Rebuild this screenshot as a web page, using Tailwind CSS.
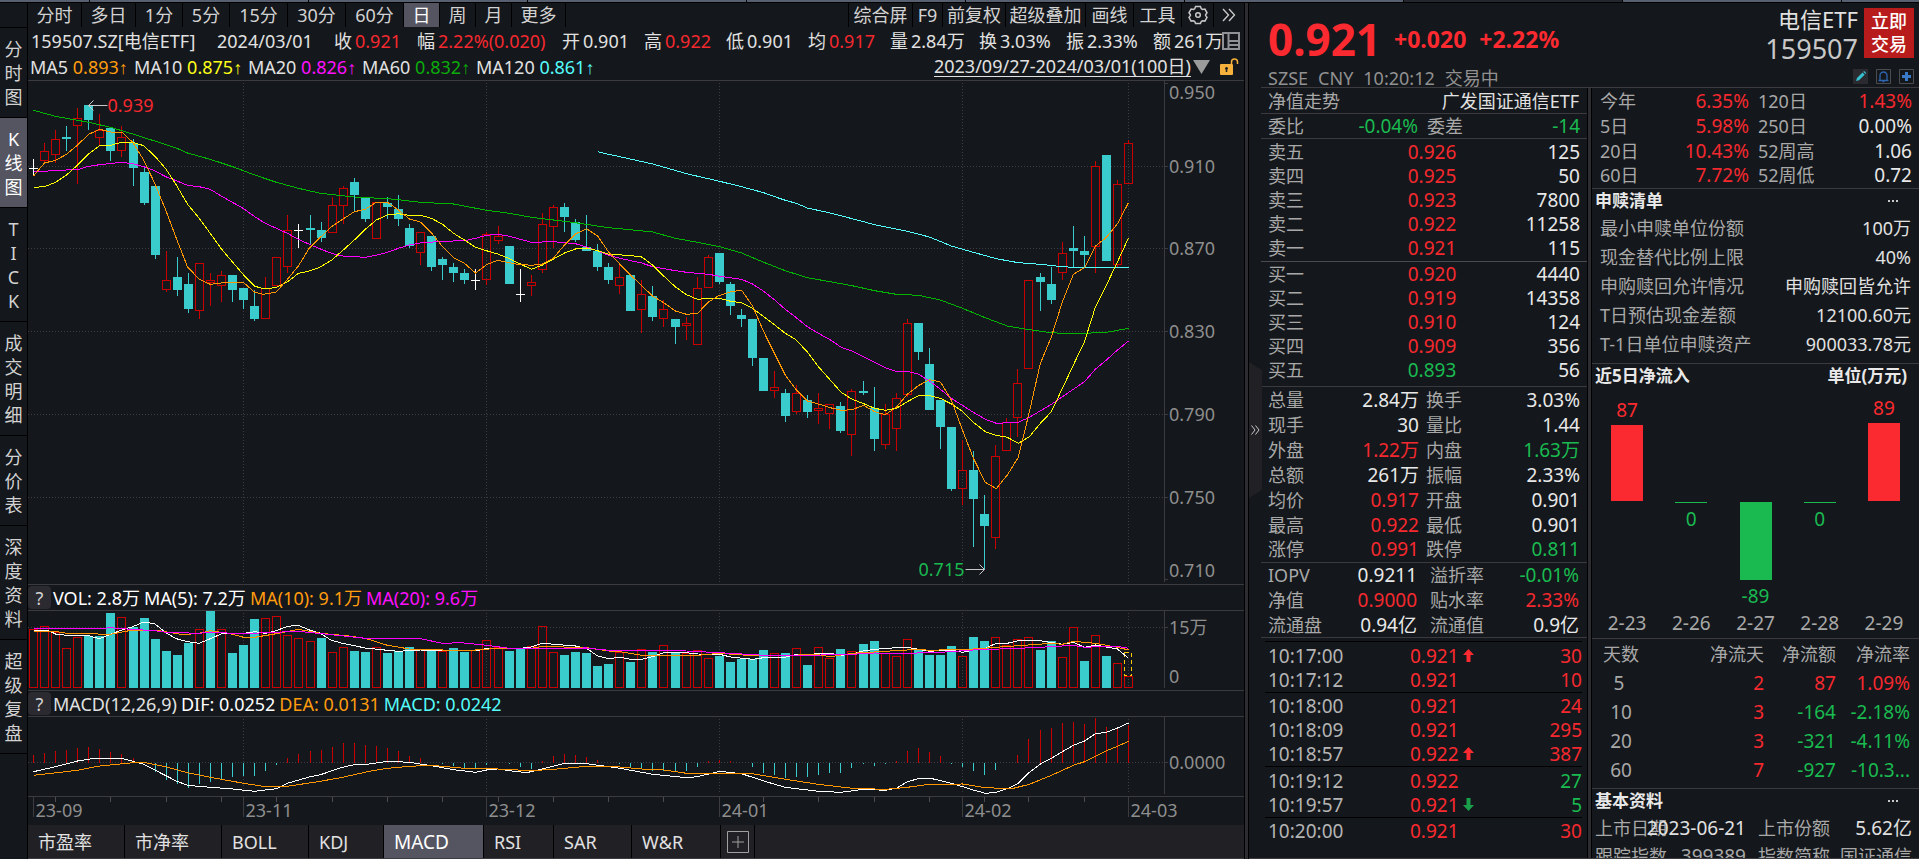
<!DOCTYPE html>
<html lang="zh-CN">
<head>
<meta charset="utf-8">
<title>159507.SZ 电信ETF</title>
<script src="https://cdn.jsdelivr.net/npm/@tailwindcss/browser@4"></script>
</head>
<body class="bg-[#14171b] text-[#e1e1e1] text-[18px] leading-6 font-['Noto_Sans','Noto_Sans_CJK_SC',sans-serif]">
<div class="h-screen overflow-hidden flex flex-col">
  <div class="h-[3px] shrink-0 flex bg-[#566070] border-b border-black">
    <div class="w-[90px] border-r border-black"></div><div class="w-[219px] border-r border-black"></div><div class="w-[219px] border-r border-black"></div><div class="w-[219px] border-r border-black"></div><div class="w-[219px] border-r border-black"></div><div class="w-[219px] border-r border-black"></div><div class="w-[219px] border-r border-black"></div><div class="w-[219px] border-r border-black bg-[#24272e]"></div><div class="w-[219px] border-r border-black"></div>
  </div>
  <div class="flex flex-1 min-h-0 whitespace-nowrap">

    <!-- view switcher -->
    <nav class="w-[28px] shrink-0 border-r border-black pt-6 flex flex-col text-[#d2d2d2]">
      <button class="border-t border-black h-[90px] flex flex-col items-center justify-center"><span>分</span><span>时</span><span>图</span></button>
      <button class="border-t border-black h-[90px] flex flex-col items-center justify-center bg-[#555561] text-white"><span>K</span><span>线</span><span>图</span></button>
      <button class="border-t border-black h-[114px] flex flex-col items-center justify-center"><span>T</span><span>I</span><span>C</span><span>K</span></button>
      <button class="border-t border-black h-[114px] flex flex-col items-center justify-center"><span>成</span><span>交</span><span>明</span><span>细</span></button>
      <button class="border-t border-black h-[90px] flex flex-col items-center justify-center"><span>分</span><span>价</span><span>表</span></button>
      <button class="border-t border-black h-[114px] flex flex-col items-center justify-center"><span>深</span><span>度</span><span>资</span><span>料</span></button>
      <button class="border-y border-black h-[115px] flex flex-col items-center justify-center"><span>超</span><span>级</span><span>复</span><span>盘</span></button>
    </nav>

    <!-- chart column -->
    <main class="flex-1 min-w-0 flex flex-col">
      <div class="h-6 shrink-0 flex justify-between text-[#d2d2d2]">
        <div class="flex">
          <button class="w-[54px] border-r border-black">分时</button><button class="w-[54px] border-r border-black">多日</button><button class="w-[47px] border-r border-black">1分</button><button class="w-[47px] border-r border-black">5分</button><button class="w-[58px] border-r border-black">15分</button><button class="w-[58px] border-r border-black">30分</button><button class="w-[58px] border-r border-black">60分</button><button class="w-[36px] border-r border-black bg-[#555561] text-white">日</button><button class="w-[36px] border-r border-black">周</button><button class="w-[36px] border-r border-black">月</button><button class="w-[54px] border-r border-black">更多</button>
        </div>
        <div class="flex">
          <button class="w-[64px] border-l border-black">综合屏</button><button class="w-[30px] border-l border-black">F9</button><button class="w-[63px] border-l border-black">前复权</button><button class="w-[80px] border-l border-black">超级叠加</button><button class="w-[48px] border-l border-black">画线</button><button class="w-[48px] border-l border-black">工具</button>
          <button class="w-[32px] border-l border-black flex items-center justify-center" aria-label="设置"><svg width="20" height="20" viewBox="0 0 20 20" fill="none" stroke="#c8c8c8" stroke-width="1.5"><path d="M7.6 1.5h4.8l.9 2.2 1.2.7 2.4-.3 2.1 3.7-1.4 1.9v.9l1.4 1.8-2.1 3.7-2.4-.3-1.2.7-.9 2.1H7.6l-.9-2.1-1.2-.7-2.4.3L1 12.400l1.400-1.800v-.9L1 7.800l2.100-3.700 2.400.3 1.200-.7z"/><circle cx="10" cy="10" r="2.300"/></svg></button>
          <button class="w-[31px] border-l border-black flex items-center justify-center" aria-label="展开"><svg width="14" height="14" viewBox="0 0 14 14" fill="none" stroke="#c8c8c8" stroke-width="1.400"><path d="M1 1l5.500 6L1 13M7 1l5.500 6L7 13"/></svg></button>
        </div>
      </div>
      <div class="h-[27px] shrink-0 flex items-center pl-[3px] relative">
        <span class="w-[186px]">159507.SZ[电信ETF]</span>
        <span class="w-[117px]">2024/03/01</span>
        <span class="w-[83px]">收<span class="text-[#f4292f] ml-[3px]">0.921</span></span>
        <span class="w-[145px]">幅<span class="text-[#f4292f] ml-[3px]">2.22%(0.020)</span></span>
        <span class="w-[82px]">开<span class="ml-[3px]">0.901</span></span>
        <span class="w-[82px]">高<span class="text-[#f4292f] ml-[3px]">0.922</span></span>
        <span class="w-[82px]">低<span class="ml-[3px]">0.901</span></span>
        <span class="w-[82px]">均<span class="text-[#f4292f] ml-[3px]">0.917</span></span>
        <span class="w-[89px]">量<span class="ml-[3px]">2.84万</span></span>
        <span class="w-[87px]">换<span class="ml-[3px]">3.03%</span></span>
        <span class="w-[87px]">振<span class="ml-[3px]">2.33%</span></span>
        <span>额<span class="ml-[3px]">261万</span></span>
        <svg class="absolute right-1 top-[5px]" width="18" height="18" viewBox="0 0 18 18" fill="none" stroke="#8f9196" stroke-width="2"><path d="M1 1h16v16H1zM6.500 1v16M6.500 9H17M6.500 13H17"/></svg>
      </div>
      <div class="h-[27px] shrink-0 flex items-center pl-[2px] border-b border-[#3a3a3f]">
        <span class="w-[104px]">MA5 <span class="text-[#ff9c0f]">0.893<span class="font-['Liberation_Sans']">↑</span></span></span>
        <span class="w-[114px]">MA10 <span class="text-[#ffff19]">0.875<span class="font-['Liberation_Sans']">↑</span></span></span>
        <span class="w-[114px]">MA20 <span class="text-[#ff10ff]">0.826<span class="font-['Liberation_Sans']">↑</span></span></span>
        <span class="w-[114px]">MA60 <span class="text-[#0cab0c]">0.832<span class="font-['Liberation_Sans']">↑</span></span></span>
        <span>MA120 <span class="text-[#54fcfc]">0.861<span class="font-['Liberation_Sans']">↑</span></span></span>
        <a href="#" class="ml-auto border-b border-[#e1e1e1] leading-[19px]">2023/09/27-2024/03/01(100日)</a>
        <svg class="ml-px mr-2" width="19" height="16" viewBox="0 0 19 16"><path d="M1 1h17L9.500 15z" fill="#9b9b9b"/></svg>
        <svg class="mr-[5px]" width="20" height="18" viewBox="0 0 20 18"><rect x="1" y="6" width="13" height="11" rx="1" fill="#f5b13c"/><path d="M12.500 6V4a3 3 0 0 1 6 0v2" fill="none" stroke="#f5b13c" stroke-width="1.500"/><path d="M7.500 9v5M6 10.500h3" stroke="#222" stroke-width="1.500"/></svg>
      </div>

      <div class="h-[504px] shrink-0 flex border-b border-[#3a3a3f]">
        <svg id="price" class="flex-1 min-w-0 h-full"></svg>
        <svg class="w-20 h-full shrink-0" fill="#8e8e8e" stroke="none"><path d="M.5 0V501M0 2.500H4M0 85.500H4M0 167.500H4M0 250.500H4M0 333.500H4M0 416.500H4M0 498.500H4" stroke="#3a3a3f"/><text x="5" y="18">0.950</text><text x="5" y="92">0.910</text><text x="5" y="174">0.870</text><text x="5" y="257">0.830</text><text x="5" y="340">0.790</text><text x="5" y="423">0.750</text><text x="5" y="496">0.710</text></svg>
      </div>
      <div class="h-[26px] shrink-0 flex items-center gap-1 border-b border-[#3a3a3f] text-white">
        <button class="w-[23px] h-[23px] leading-[22px] rounded bg-[#2a2a30] text-[#d2d2d2] -mr-[2px]">?</button>
        <span>VOL: 2.8万</span><span>MA(5): 7.2万</span><span class="text-[#ff9c0f]">MA(10): 9.1万</span><span class="text-[#ff10ff]">MA(20): 9.6万</span>
      </div>
      <div class="h-[80px] shrink-0 flex border-b border-[#3a3a3f]">
        <svg id="volume" class="flex-1 min-w-0 h-full"></svg>
        <svg class="w-20 h-full shrink-0" fill="#8e8e8e"><path d="M.5 0V77M0 16.500H4" stroke="#3a3a3f"/><text x="5" y="23">15万</text><text x="5" y="72">0</text></svg>
      </div>
      <div class="h-[26px] shrink-0 flex items-center gap-1 border-b border-[#3a3a3f]">
        <button class="w-[23px] h-[23px] leading-[22px] rounded bg-[#2a2a30] text-[#d2d2d2] -mr-[2px]">?</button>
        <span>MACD(12,26,9)</span><span class="text-white">DIF: 0.0252</span><span class="text-[#ff9c0f]">DEA: 0.0131</span><span class="text-[#54fcfc]">MACD: 0.0242</span>
      </div>
      <div class="h-[80px] shrink-0 flex border-b border-[#3a3a3f]">
        <svg id="macd" class="flex-1 min-w-0 h-full"></svg>
        <svg class="w-20 h-full shrink-0" fill="#8e8e8e"><path d="M.5 0V77M0 45.500H4" stroke="#3a3a3f"/><text x="5" y="52">0.0000</text></svg>
      </div>
      <svg id="dates" class="w-full h-7 shrink-0 overflow-visible"></svg>
      <div class="h-[34px] shrink-0 flex bg-[#212025] border-b border-[#3a3a3f] text-left">
        <button class="w-[97px] pl-[10px] text-left border-r border-black">市盈率</button><button class="w-[97px] pl-[10px] text-left border-r border-black">市净率</button><button class="w-[87px] pl-[10px] text-left border-r border-black">BOLL</button><button class="w-[75px] pl-[10px] text-left border-r border-black">KDJ</button><button class="w-[100px] pl-[10px] text-left border-r border-black bg-[#555561] text-white text-[19px]">MACD</button><button class="w-[70px] pl-[10px] text-left border-r border-black">RSI</button><button class="w-[78px] pl-[10px] text-left border-r border-black">SAR</button><button class="w-[89px] pl-[10px] text-left border-r border-black">W&amp;R</button>
        <button class="w-[34px] border-r border-black flex items-center justify-center" aria-label="添加指标"><svg width="22" height="22" viewBox="0 0 22 22" fill="none" stroke="#a0a0a0"><path d="M.5.5h21v21H.5zM11 5v12M5 11h12"/></svg></button>
      </div>
    </main>

    <div class="w-1 shrink-0 border-l border-black bg-[#2d2c31]"></div>

    <!-- quote panel -->
    <aside class="w-[671px] shrink-0 border-l border-black relative flex flex-col pl-[12px]">
      <button class="absolute left-0 top-[359px] w-[13px] h-[136px] flex items-center justify-center bg-[#212025] [clip-path:polygon(0_0,100%_6%,100%_94%,0_100%)]" aria-label="收起"><svg width="9" height="10" viewBox="0 0 9 10" fill="none" stroke="#c8c8c8"><path d="M.5.5L4 5 .5 9.500M4.500.5L8 5 4.500 9.500"/></svg></button>
      <header class="h-[85px] shrink-0 border-b border-[#3a3a3f] pl-[7px] pr-[5px] flex justify-between">
        <div class="flex flex-col justify-between">
          <div class="flex items-center gap-[13px] font-bold text-[#fb2a30] pt-2">
            <span class="text-[44px] leading-[56px]">0.921</span><span class="text-[23px]">+0.020</span><span class="text-[23px]">+2.22%</span>
          </div>
          <div class="flex gap-[10px] text-[#919191] leading-[17px]"><span>SZSE</span><span>CNY</span><span>10:20:12</span><span>交易中</span></div>
        </div>
        <div class="flex flex-col">
          <div class="flex gap-[6px]">
            <div class="text-right pt-[2px]"><div class="text-[22px] leading-[28px]">电信ETF</div><div class="text-[27px] leading-[32px] text-[#c8c8c8]">159507</div></div>
            <button class="mt-[5px] w-[50px] h-[50px] bg-[#b81b1b] text-white font-medium leading-[23px] whitespace-normal px-1">立即交易</button>
          </div>
          <div class="flex justify-end gap-2 mt-auto">
            <button class="mb-[3px]" aria-label="编辑"><svg width="15" height="15" viewBox="0 0 15 15"><rect width="15" height="15" fill="#2a2a30"/><path d="M3 12l1-3 5.500-5.500 2.200 2.200L6 11.200z" fill="#35c0d0"/><path d="M10.200 2.800l1-.8 2 2-.8 1z" fill="#35c0d0"/></svg></button>
            <button class="mb-[3px]" aria-label="提醒"><svg width="15" height="15" viewBox="0 0 15 15" fill="none"><path d="M.5.5h14v14H.5z" stroke="#4a4c50"/><path d="M2.500 11.500h10M4 11V6.500a3.500 3.500 0 0 1 7 0V11M6.500 12.500h2" stroke="#2f65b0" stroke-width="1.300"/></svg></button>
            <button class="mb-[3px]" aria-label="加自选"><svg width="15" height="15" viewBox="0 0 15 15" fill="none"><path d="M.5.5h14v14H.5z" stroke="#4a4c50"/><path d="M7.500 3v9M3 7.500h9" stroke="#3a78c8" stroke-width="3"/></svg></button>
          </div>
        </div>
      </header>

      <div class="flex flex-1 min-h-0 overflow-hidden text-[#a8a8a8]">
        <div class="flex-1 min-w-0 flex flex-col border-r border-black">
          <div class="h-[26px] shrink-0 pl-[7px] pr-2 flex justify-between items-center border-b border-[#3a3a3f]"><span>净值走势</span><span class="text-[#e1e1e1]">广发国证通信ETF</span></div>
          <div class="h-[25px] shrink-0 pl-[7px] pr-[7px] flex items-center border-b border-[#3a3a3f]"><span>委比</span><span class="ml-auto text-[19px] text-[#1aba51]">-0.04%</span><span class="w-[162px] pl-[9px] flex justify-between"><span>委差</span><span class="text-[19px] text-[#1aba51]">-14</span></span></div>
          <table id="book" class="w-full table-fixed shrink-0 border-collapse"></table>
          <table id="stats" class="w-full table-fixed shrink-0 border-collapse"></table>
          <table id="fund" class="w-full table-fixed shrink-0 border-collapse"></table>
          <table id="ticks" class="mt-[3px] ml-1 mr-[5px] table-fixed shrink-0 border-collapse text-[19px] text-[#b4b4b4]"></table>
        </div>
        <div class="w-[4px] shrink-0 bg-[#2d2c31] border-r border-black"></div>
        <div class="w-[327px] shrink-0 flex flex-col">
          <table id="returns" class="w-full table-fixed shrink-0 border-b border-[#3a3a3f]"></table>
          <div class="h-[25px] shrink-0 pl-[3px] pr-[21px] flex justify-between items-center text-[#e8e8e8] text-[17px]"><b>申赎清单</b><button aria-label="更多" class="flex gap-[2px]"><i class="size-[2px] bg-[#c8c8c8]"></i><i class="size-[2px] bg-[#c8c8c8]"></i><i class="size-[2px] bg-[#c8c8c8]"></i></button></div>
          <table id="list" class="w-full shrink-0"></table>
          <div class="h-[30px] mt-1 shrink-0 pr-3 pl-[3px] flex justify-between border-t border-[#3a3a3f] text-[#e8e8e8] text-[17px]"><b>近5日净流入</b><b>单位(万元)</b></div>
          <div id="flow" class="h-[219px] shrink-0 flex px-[3px]"></div>
          <div class="h-[27px] shrink-0 flex px-[3px] text-center text-[19px] leading-[22px] border-b border-[#3a3a3f]"><span class="flex-1">2-23</span><span class="flex-1">2-26</span><span class="flex-1">2-27</span><span class="flex-1">2-28</span><span class="flex-1">2-29</span></div>
          <table class="w-full table-fixed shrink-0 text-right text-[19px]">
            <thead><tr class="h-[30px] text-[18px]"><th class="font-normal text-left pl-[11px] w-[90px]">天数</th><th class="font-normal">净流天</th><th class="font-normal w-[72px]">净流额</th><th class="font-normal w-[83px] pr-[9px]">净流率</th></tr></thead>
            <tbody>
              <tr class="h-[29px]"><td class="text-center pr-9">5</td><td class="text-[#f4292f]">2</td><td class="text-[#f4292f]">87</td><td class="text-[#f4292f] pr-[9px]">1.09%</td></tr>
              <tr class="h-[29px]"><td class="text-center pr-[32px]">10</td><td class="text-[#f4292f]">3</td><td class="text-[#1aba51]">-164</td><td class="text-[#1aba51] pr-[9px]">-2.18%</td></tr>
              <tr class="h-[29px]"><td class="text-center pr-[32px]">20</td><td class="text-[#f4292f]">3</td><td class="text-[#1aba51]">-321</td><td class="text-[#1aba51] pr-[9px]">-4.11%</td></tr>
              <tr class="h-[29px]"><td class="text-center pr-[32px]">60</td><td class="text-[#f4292f]">7</td><td class="text-[#1aba51]">-927</td><td class="text-[#1aba51] pr-[9px]">-10.3...</td></tr>
            </tbody>
          </table>
          <div class="h-[26px] mt-[3px] shrink-0 pl-[3px] pr-[21px] flex justify-between items-center border-t border-[#3a3a3f] text-[#e8e8e8] text-[17px]"><b>基本资料</b><button aria-label="更多" class="flex gap-[2px]"><i class="size-[2px] bg-[#c8c8c8]"></i><i class="size-[2px] bg-[#c8c8c8]"></i><i class="size-[2px] bg-[#c8c8c8]"></i></button></div>
          <div class="h-7 shrink-0 flex items-center pl-[3px] pr-[7px]"><span class="w-[50px]">上市日期</span><span class="w-[101px] flex justify-end text-[19px] text-[#e1e1e1]">2023-06-21</span><span class="ml-3">上市份额</span><span class="ml-auto text-[19px] text-[#e1e1e1]">5.62亿</span></div>
          <div class="h-7 shrink-0 flex items-center pl-[3px] pr-[7px]"><span class="w-[50px]">跟踪指数</span><span class="w-[101px] flex justify-end text-[19px]">399389</span><span class="ml-3">指数简称</span><span class="ml-auto">国证通信</span></div>
        </div>
      </div>
      <div class="-ml-3 h-px shrink-0 bg-[#3a3a3f]"></div>
    </aside>
  </div>
</div>

<script>
const RED = '#c80000', CYAN = '#3acccc', GRID = '#3c3c42';
const tone = { r: 'text-[#f4292f]', g: 'text-[#1aba51]', w: 'text-[#e8e8e8]' };

/* ---------- data tables ---------- */
const book = [['卖五','0.926','r','125'],['卖四','0.925','r','50'],['卖三','0.923','r','7800'],['卖二','0.922','r','11258'],['卖一','0.921','r','115'],['买一','0.920','r','4440'],['买二','0.919','r','14358'],['买三','0.910','r','124'],['买四','0.909','r','356'],['买五','0.893','g','56']];
const bookRow = ([l, p, c, v]) => `<tr class="h-6"><td class="pl-[7px]">${l}</td><td class="text-[19px] text-right pr-[22px] ${tone[c]}">${p}</td><td class="text-[19px] text-right pr-[7px] text-[#e8e8e8]">${v}</td></tr>`;
document.getElementById('book').innerHTML =
  `<tbody class="border-b border-[#4a4a50]"><tr class="h-px"></tr>${book.slice(0, 5).map(bookRow).join('')}<tr class="h-px"></tr></tbody>` +
  `<tbody class="border-b border-[#3a3a3f]">${book.slice(5).map(bookRow).join('')}<tr class="h-[5px]"></tr></tbody>`;

const pairRow = (label, value) => ([a, b, c, d, e, f]) => `<tr class="h-[25px]"><td class="w-[68px] pl-[7px]">${a}</td><td class="text-[19px] text-right ${tone[c]}">${b}</td><td class="${label}">${d}</td><td class="w-[82px] text-[19px] text-right ${value} ${tone[f]}">${e}</td></tr>`;
document.getElementById('stats').innerHTML = '<tbody class="border-b border-[#3a3a3f]">' + [
  ['总量','2.84万','w','换手','3.03%','w'],['现手','30','w','量比','1.44','w'],['外盘','1.22万','r','内盘','1.63万','g'],['总额','261万','w','振幅','2.33%','w'],['均价','0.917','r','开盘','0.901','w'],['最高','0.922','r','最低','0.901','w'],['涨停','0.991','r','跌停','0.811','g']
].map(pairRow('w-[86px] pl-[7px]', 'pr-[7px]')).join('') + '</tbody>';
document.getElementById('fund').innerHTML = '<tbody class="border-b border-[#3a3a3f]">' + [
  ['IOPV','0.9211','w','溢折率','-0.01%','g'],['净值','0.9000','r','贴水率','2.33%','r'],['流通盘','0.94亿','w','流通值','0.9亿','w']
].map(pairRow('w-[88px] pl-[13px]', 'pr-[8px]')).join('') + '</tbody>';

const arrow = { u: '<svg class="inline ml-1 -mt-1" width="11" height="13" viewBox="0 0 11 13"><path d="M5.500 0L11 6H7.500v7h-4V6H0z" fill="#fb2a30"/></svg>', d: '<svg class="inline ml-1 -mt-1" width="11" height="13" viewBox="0 0 11 13"><path d="M5.500 13L11 7H7.500V0h-4v7H0z" fill="#1aa04a"/></svg>', '': '' };
document.getElementById('ticks').innerHTML = [
  [['10:17:00','0.921','u','30','r'],['10:17:12','0.921','','10','r']],
  [['10:18:00','0.921','','24','r'],['10:18:09','0.921','','295','r'],['10:18:57','0.922','u','387','r']],
  [['10:19:12','0.922','','27','g'],['10:19:57','0.921','d','5','g']],
  [['10:20:00','0.921','','30','r']]
].map(g => `<tbody class="border-t border-black"><tr class="h-[2px]"></tr>${g.map(([t, p, a, v, c]) => `<tr class="h-6"><td class="pl-[3px] w-[145px]">${t}</td><td class="text-[#fb2a30]">${p}${arrow[a]}</td><td class="text-right ${tone[c]}">${v}</td></tr>`).join('')}</tbody>`).join('');

document.getElementById('returns').innerHTML = '<tbody>' + [
  ['今年','6.35%','120日','1.43%','r'],['5日','5.98%','250日','0.00%','w'],['20日','10.43%','52周高','1.06','w'],['60日','7.72%','52周低','0.72','w']
].map(([a, b, c, d, e]) => `<tr class="h-[25px]"><td class="pl-2 w-[60px]">${a}</td><td class="w-[97px] text-right text-[19px] text-[#f4292f]">${b}</td><td class="pl-[9px]">${c}</td><td class="w-[90px] text-right text-[19px] pr-[7px] ${tone[e]}">${d}</td></tr>`).join('') + '</tbody>';
document.getElementById('list').innerHTML = '<tbody>' + [
  ['最小申赎单位份额','100万'],['现金替代比例上限','40%'],['申购赎回允许情况','申购赎回皆允许'],['T日预估现金差额','12100.60元'],['T-1日单位申赎资产','900033.78元']
].map(([a, b]) => `<tr class="h-[29px]"><td class="pl-2">${a}</td><td class="text-right pr-2 text-[#e1e1e1]">${b}</td></tr>`).join('') + '</tbody>';

document.getElementById('flow').innerHTML = [87, 0, -89, 0, 89].map(v => {
  const bar = h => `<div class="w-8 ${v > 0 ? 'bg-[#fb2a30]' : 'bg-[#1aba51]'}" style="height:${h}px"></div>`;
  return `<div class="flex-1 flex flex-col items-center text-[19px]"><div class="h-[108px] flex flex-col items-center justify-end gap-[3px] text-[#fb2a30]">${v > 0 ? `<span>${v}</span>${bar(Math.round(v * .875))}` : ''}</div>` +
    (v > 0 ? '' : `<div class="mt-px flex flex-col items-center gap-1 text-[#1aba51]">${bar(Math.max(1, Math.round(-v * .875)))}<span>${v}</span></div>`) + '</div>';
}).join('');

/* ---------- candle data: type, body top, body bottom, high, low (third-pixels) ---------- */
const candles = `x505,505,477,528 r453,482,430,485 r418,464,390,490 c411,416,378,453 r355,377,323,552 c316,360,316,390 r391,415,342,436 c383,453,383,483 r412,452,378,471 c430,503,418,558 c516,609,505,614 c558,765,558,777 r841,869,753,876 c831,869,771,888 c852,927,819,939 r790,932,790,957 r841,850,819,918 r826,857,813,906 c825,870,825,906 c864,900,864,927 c918,957,870,963 r864,956,831,956 r772,857,772,857 r691,800,645,819 x690,690,672,744 c684,690,645,735 c690,714,666,726 r616,700,591,700 r565,619,558,671 c546,585,534,634 c594,657,594,666 r606,718,606,718 c609,621,591,657 c627,657,585,679 c684,738,672,744 r697,758,697,795 c708,801,708,813 c777,795,770,840 c801,819,789,846 c819,840,807,852 x841,841,807,870 r703,839,696,854 r709,724,678,731 c738,852,738,852 x883,883,807,906 r847,857,825,888 r673,811,640,818 r622,682,615,744 c621,651,609,696 c666,720,657,726 c741,753,645,753 c753,801,732,813 c801,840,789,852 r832,857,795,881 c825,932,825,932 r883,931,840,999 c888,951,857,963 r928,956,900,981 c957,981,957,1032 r970,979,952,1020 r865,1036,831,1036 r772,863,765,863 c759,846,759,852 c852,918,846,945 c945,957,927,981 c957,1074,957,1098 c1074,1173,1074,1173 r1162,1172,1113,1194 c1179,1248,1167,1266 r1180,1235,1155,1242 c1200,1236,1185,1254 r1225,1234,1179,1272 r1213,1241,1213,1288 c1218,1293,1206,1299 r1174,1304,1167,1368 c1173,1179,1143,1185 c1224,1317,1161,1353 r1243,1334,1212,1347 r1195,1286,1179,1353 r970,1184,957,1190 c969,1056,969,1080 c1092,1230,1044,1230 c1200,1281,1200,1347 c1281,1467,1281,1473 r1411,1466,1320,1515 c1410,1497,1353,1641 c1542,1578,1485,1708 r1369,1613,1335,1647 r1267,1352,1254,1352 r1150,1253,1107,1311 r841,1106,841,1106 c831,846,819,933 c852,900,801,912 r760,818,726,840 c744,753,678,801 c753,765,708,801 r499,742,484,819 c465,783,465,783 r553,794,540,804 r430,551,421,551`.split(' ').map(s => [s[0], ...s.slice(1).split(',').map(Number)]);
const vols = '176r 167r 185r 235r 200r 197c 197c 129c 142r 171c 144c 207c 243c 255c 219c 176r 123c 176r 249c 225c 147c 145r 139r 194r 203r 214r 204c 247r 230r 243c 246c 232r 249c 243c 231c 238r 240c 243r 234c 246c 240r 211r 232r 243c 237c 228r 169r 247r 255c 246c 249c 288c 282c 247r 276c 238r 246c 226r 246c 250r 241r 265r 258c 276c 267c 267c 240c 250r 249c 235r 285c 232r 265r 237c 244r 222c 213c 250r 259r 208r 240c 255c 255c 228c 259r 201c 213c 202r 226r 208r 202r 240c 213c 262r 172r 273c 196r 258c 280r 319r'.split(' ');
const hist = [555,549,543,540,534,531,537,546,552,564,577,606,630,642,654,642,636,628,621,618,618,603,585,564,552,543,540,531,519,519,525,528,534,543,559,565,577,582,588,596,594,585,577,582,591,596,574,558,552,555,561,570,577,582,592,596,602,602,605,603,591,574,570,572,577,591,609,615,624,621,621,615,609,609,594,582,588,582,573,543,534,546,558,582,591,603,615,600,579,555,507,480,474,459,456,462,444,471,471,465];
/* Curves: x,y pairs; after "|" x restarts at 1519 */
const curves = {
  price: [
    ['#00b400', '82,331 136,349 217,367 271,382 325,402 379,423 432,444 459,459 515,478 570,500 624,525 677,547 731,565 785,580 868,591 949,596 976,599 1030,607 1111,612 1192,631 1248,640 1302,652 1410,668 1491,683 | 0,686 80,696 136,715 190,727 244,740 298,759 352,787 405,812 459,833 515,845 569,857 624,872 677,883 731,886 785,900 839,925 895,953 949,978 1003,989 1057,998 1084,1000 1138,1000 1192,997 1219,991 1246,985'],
    ['#54fcfc', '1464,455 1491,463 | 0,470 80,492 163,521 244,544 298,560 352,578 379,590 405,601 432,610 459,624 515,639 569,656 624,674 704,694 758,711 812,738 866,757 922,776 976,788 1030,793 1084,800 1111,802 1246,802'],
    ['#ff00ff', '82,514 109,514 136,511 190,509 217,499 244,494 298,487 325,491 352,500 379,512 406,530 432,542 459,556 488,560 515,568 542,588 597,626 624,650 650,670 677,685 704,700 731,718 758,733 785,747 812,760 839,768 895,772 922,766 949,757 976,745 1003,735 1030,729 1084,724 1138,722 1165,715 1192,706 1219,703 1248,709 1302,727 1356,725 1410,731 1437,741 1464,753 1491,766 | 0,775 53,789 80,800 136,812 163,817 217,823 244,829 298,838 325,852 352,874 379,900 405,928 432,953 459,980 486,1000 515,1019 542,1042 569,1053 597,1070 624,1087 650,1103 677,1114 704,1114 731,1122 758,1143 785,1168 812,1195 866,1237 895,1258 922,1270 976,1267 1003,1252 1057,1213 1084,1190 1138,1145 1165,1107 1192,1080 1219,1050 1246,1023'],
    ['#ffff00', '82,562 109,560 136,547 163,525 190,495 217,462 244,437 271,436 298,427 325,427 352,437 379,468 406,506 432,555 459,612 488,655 515,700 542,746 570,787 597,825 624,859 650,867 677,862 704,846 731,820 758,813 785,801 812,781 839,752 868,720 895,688 922,660 949,645 976,641 1003,646 1030,646 1057,655 1084,673 1111,700 1138,720 1165,742 1192,752 1219,762 1248,776 1275,792 1302,808 1329,795 1356,777 1383,759 1410,747 1437,744 1464,752 1491,763 | 20,766 53,771 80,795 107,828 136,861 163,884 190,898 217,895 244,895 271,904 298,908 325,925 352,950 379,975 405,1000 432,1020 459,1056 486,1100 515,1140 542,1177 569,1198 597,1211 624,1225 650,1231 677,1225 704,1205 731,1187 758,1187 785,1195 812,1212 839,1234 866,1267 895,1295 922,1306 949,1312 976,1330 1003,1310 1030,1270 1057,1235 1084,1165 1111,1095 1138,1025 1165,920 1192,855 1219,785 1246,714'],
    ['#ff9600', '82,528 109,489 136,481 163,463 190,435 217,403 244,388 271,396 298,396 325,427 352,480 379,550 406,630 432,715 459,800 488,838 515,853 542,849 597,848 624,877 645,883 677,876 704,838 731,798 758,744 785,712 812,680 868,635 895,628 922,607 949,607 976,630 1003,657 1030,666 1057,698 1084,740 1111,773 1138,790 1165,819 1192,794 1219,781 1265,792 1302,796 1329,792 1356,774 1383,735 1410,702 1437,686 1464,708 1491,756 | 0,793 26,825 53,857 80,888 107,908 136,933 163,943 190,940 217,906 240,888 271,875 298,871 325,918 352,995 379,1062 405,1125 432,1170 459,1203 486,1212 515,1223 542,1231 569,1229 597,1216 624,1235 650,1244 677,1222 704,1183 731,1157 758,1139 785,1146 812,1200 839,1290 866,1375 895,1447 922,1466 949,1425 976,1372 1003,1235 1030,1090 1057,1010 1084,905 1111,823 1138,803 1165,738 1192,712 1219,671 1246,608']
  ],
  volume: [
    ['#ffffff', '82,181 117,181 136,192 163,196 217,197 244,206 271,193 298,180 325,170 352,156 379,161 406,188 432,206 459,215 488,220 515,206 542,192 590,191 624,185 650,190 677,182 704,169 731,166 758,180 785,190 812,211 839,220 895,234 949,241 976,244 1030,240 1084,241 1165,243 1192,235 1275,235 1302,231 1329,220 1410,228 1437,235 1464,258 1491,266 | 0,262 26,268 53,268 80,260 107,248 163,248 190,252 244,253 271,261 325,268 352,263 405,262 432,253 459,253 515,250 542,256 569,252 597,242 650,235 704,232 758,244 812,240 839,247 866,240 895,235 922,220 949,220 976,212 1030,212 1084,223 1111,217 1138,232 1165,225 1219,237 1246,265'],
    ['#ff9600', '82,184 136,184 163,190 271,193 325,180 379,180 450,194 488,190 515,182 560,190 597,202 624,202 677,191 731,178 785,190 850,197 895,205 949,226 1003,237 1084,240 1165,240 1220,235 1302,235 1329,229 1356,230 1437,233 1491,243 | 0,245 53,256 190,256 244,250 325,257 486,254 515,260 569,250 650,244 731,238 758,241 866,237 922,232 976,227 1057,220 1084,223 1111,214 1165,220 1219,232 1246,240'],
    ['#ff00ff', '82,176 244,176 271,173 298,176 379,182 406,187 488,190 515,187 597,191 731,184 812,194 895,205 1030,206 1084,220 1130,218 1192,226 1248,235 1437,234 1491,241 | 0,241 163,243 244,248 352,256 459,256 569,253 624,249 704,250 785,247 866,240 976,235 1030,232 1111,226 1138,232 1192,229 1219,229 1246,235']
  ],
  macd: [
    ['#ffffff', '82,605 136,590 190,573 230,565 298,565 325,574 352,583 379,600 432,633 459,646 515,652 570,657 624,664 677,656 704,640 758,621 785,614 839,592 868,584 900,583 949,574 1003,577 1057,587 1111,599 1165,607 1192,600 1219,597 1248,602 1290,608 1329,597 1383,580 1430,580 1491,590 | 0,595 80,613 163,623 190,620 244,604 298,611 352,633 405,652 486,664 542,667 597,658 650,661 677,655 704,635 731,626 765,626 812,640 866,660 895,670 922,667 949,656 976,640 1003,607 1030,582 1057,565 1084,545 1111,526 1138,513 1165,491 1192,487 1219,474 1246,459'],
    ['#ff9600', '82,616 190,601 244,588 325,578 352,577 406,590 459,608 515,622 597,640 650,650 704,649 785,634 839,622 900,605 949,595 1003,589 1057,586 1138,595 1219,597 1302,602 1356,598 1437,589 1491,589 | 0,591 53,597 107,600 163,610 325,611 405,628 486,643 569,655 650,658 704,652 758,643 839,642 895,653 960,656 1003,643 1057,616 1111,586 1138,575 1192,542 1219,529 1246,514']
  ]
};
const months = [[0, '23-09'], [19, '23-11'], [41, '23-12'], [62, '24-01'], [84, '24-02'], [99, '24-03']];
const weeks = [2, 7, 12, 17, 22, 27, 32, 37, 42, 47, 52, 57, 66, 71, 76, 81, 86, 90, 95];

function draw() {
  const svg = id => document.getElementById(id);
  const W = svg('price').clientWidth;
  const step = (W - 41) / 99;
  const px = i => Math.floor(5.5 + i * step) + .5;
  const pos = (X, off) => (5.5 + (X + off - 82) / 27.1 * step).toFixed(1);
  const line = (x1, y1, x2, y2, c, extra = '') => `<path d="M${x1} ${y1}L${x2} ${y2}" stroke="${c}" ${extra}/>`;
  const dots = 'stroke-dasharray="1 2"';
  const grid = (rows, h) => rows.map(y => line(0, y, W, y, GRID, dots)).join('') +
    months.slice(1).map(([i]) => line(px(i), 2, px(i), h, GRID, dots)).join('');
  const plot = (key, toY) => curves[key].map(([c, s]) => {
    const [a, b = ''] = s.split('|');
    const pts = [[a, 0], [b, 1519]].flatMap(([part, off]) => part.trim().split(' ').filter(Boolean).map(p => { const [x, y] = p.split(',').map(Number); return pos(x, off) + ',' + toY(y).toFixed(1); }));
    return `<polyline points="${pts.join(' ')}" fill="none" stroke="${c}"/>`;
  }).join('');
  const wrap = s => `<g shape-rendering="crispEdges" fill="none">${s}</g>`;
  const box = (i, y1, y2, solid) => solid
    ? `<rect x="${px(i) - 4.5}" y="${y1}" width="9" height="${Math.max(2, y2 - y1)}" fill="${CYAN}"/>`
    : `<rect x="${px(i) - 4}" y="${y1 + .5}" width="8" height="${Math.max(2, y2 - y1 - 1)}" stroke="${RED}"/>`;

  const py = v => v / 3 - 81, pr = v => Math.round(py(v));
  svg('price').innerHTML = wrap(grid([85.5, 167.5, 250.5, 333.5, 416.5], 501) + candles.map(([t, a, b, h, l], i) => {
    const x = px(i);
    if (t === 'x') return line(x, pr(h), x, pr(l), '#fff') + line(x - 4.5, pr(a) + .5, x + 4.5, pr(a) + .5, '#fff');
    if (t === 'c') return line(x, pr(h), x, pr(l), CYAN) + box(i, pr(a), pr(b), true);
    return line(x, pr(h), x, pr(a), RED) + line(x, pr(b), x, pr(l), RED) + box(i, pr(a), pr(b), false);
  }).join('') + plot('price', py)) +
    `<path d="M${px(5) + 19} 24.5H${px(5)}m5 -5l-5 5l5 5" fill="none" stroke="#c8c8c8"/><text x="${px(5) + 19}" y="31" fill="#f4292f">0.939</text>` +
    `<path d="M${px(86) - 19} 488.5H${px(86)}m-5 -5l5 5l-5 5" fill="none" stroke="#c8c8c8"/><text x="${px(86) - 20}" y="495" text-anchor="end" fill="#1aba51">0.715</text>`;

  const vy = v => 570 + v / 3 - 611;
  svg('volume').innerHTML = wrap(grid([16.5], 77) + vols.map((s, i) => box(i, Math.round(vy(parseInt(s))), 77, s.endsWith('c'))).join('') +
    `<rect x="${px(99) - 4}" y="41.5" width="7" height="23" stroke="#ffc800" stroke-dasharray="4 3"/>` + plot('volume', vy));

  const my = v => 570 + v / 3 - 717;
  svg('macd').innerHTML = wrap(grid([45.5], 77) + hist.map((v, i) => v === 577 ? '' : line(px(i), 45.5, px(i), Math.round(my(v)), v < 577 ? RED : CYAN)).join('') + plot('macd', my));

  svg('dates').innerHTML = wrap(weeks.map(i => line(px(i), 0, px(i), 5, '#4a4a50')).join('') +
    months.map(([i]) => line(px(i), 0, px(i), 20, '#3a3a3f')).join('')) +
    months.map(([i, t]) => `<text x="${px(i) + 2}" y="20" fill="#8e8e8e">${t}</text>`).join('');
}
draw();
addEventListener('load', draw);
new ResizeObserver(draw).observe(document.getElementById('price').parentElement);
</script>
</body>
</html>
